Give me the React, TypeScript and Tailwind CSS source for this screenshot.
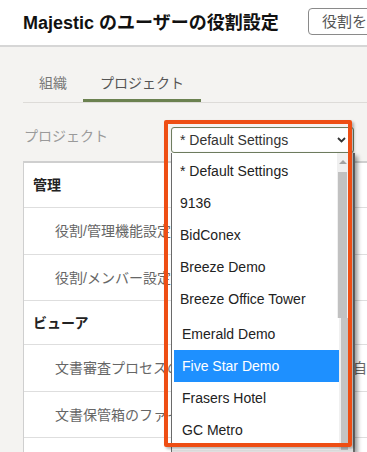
import React from 'react';

const rows: { label: string; head?: boolean; h: string }[] = [
  { label: '管理', head: true, h: 'h-[45px]' },
  { label: '役割/管理機能設定', h: 'h-[47px]' },
  { label: '役割/メンバー設定', h: 'h-[46px]' },
  { label: 'ビューア', head: true, h: 'h-[44px]' },
  { label: '文書審査プロセスのステップを追加および編集 自分', h: 'h-[47px]' },
  { label: '文書保管箱のファイルを表示', h: 'h-[46px]' },
  { label: '文書保管箱のファイルをダウンロード', h: 'h-[47px]' },
];

const upperItems = ['* Default Settings', '9136', 'BidConex', 'Breeze Demo', 'Breeze Office Tower'];
const lowerItems = ['Emerald Demo', 'Five Star Demo', 'Frasers Hotel', 'GC Metro'];

export default function App() {
  return (
    <div className="relative w-[367px] h-[452px] overflow-hidden bg-[#f4f3f1] font-['Liberation_Sans','Noto_Sans_CJK_JP',sans-serif]">
      {/* Header */}
      <div className="h-[47px] bg-white border-b-2 border-[#d6d6d6] flex items-center pl-[23px] whitespace-nowrap">
        <div className="w-[285px] shrink-0 text-[18px] leading-[24px] font-bold text-[#111]">
          Majestic のユーザーの役割設定
        </div>
        <div className="shrink-0 h-[27px] mt-[-2px] border border-[#8a8a8a] rounded-[4px] bg-white pl-[13px] pr-[13px] flex items-center text-[15px] leading-[20px] text-[#555]">
          役割を作成
        </div>
      </div>

      {/* Content */}
      <div className="pl-[23px]">
        {/* Tabs */}
        <div className="mt-[26px] flex border-b border-[#dddbd8]">
          <div className="px-[16px] pb-[6px] border-b-[3px] border-transparent text-[14px] leading-[20px] text-[#777]">
            組織
          </div>
          <div className="px-[17px] pb-[6px] border-b-[3px] border-[#6b8150] text-[14px] leading-[20px] text-[#555]">
            プロジェクト
          </div>
        </div>

        {/* Project select row */}
        <div className="mt-[24px] h-[26px] flex items-start">
          <div className="w-[148px] shrink-0 text-[14px] leading-[20px] text-[#9a9a9a] pl-[1px] mt-[-1px]">プロジェクト</div>
          <div className="w-[183px] h-[26px] shrink-0 border border-[#6f7d60] rounded-[3px] bg-white flex items-center pl-[8px] pr-[6px] text-[14px] leading-[18px] text-[#333] shadow-[inset_0_0_1px_rgba(0,0,0,0.2)]">
            <span className="flex-1">* Default Settings</span>
            <svg width="9" height="6" viewBox="0 0 9 6" className="mr-[1px]">
              <path d="M1 1 L4.5 4.5 L8 1" fill="none" stroke="#333" strokeWidth="1.8" />
            </svg>
          </div>
        </div>

        {/* Table */}
        <div className="mt-[8px] bg-white border-t-2 border-l border-[#cfcfcf]">
          {rows.map((r, i) => (
            <div
              key={i}
              className={`${r.h} border-b border-[#dedede] flex items-center whitespace-nowrap ${
                r.head ? 'pl-[9px] font-bold text-[#222]' : 'pl-[31px] text-[#666]'
              } text-[14px] leading-[20px]`}
            >
              {r.label}
            </div>
          ))}
        </div>
      </div>

      {/* Dropdown list (open) */}
      <div className="absolute left-[171px] top-[153px] w-[184px] h-[299px] border-l border-r-2 border-[#6a6a6a] bg-white shadow-[3px_3px_4px_rgba(0,0,0,0.35)] text-[14px] leading-[18px] text-[#222] whitespace-nowrap">
        {/* upper block */}
        <div className="flex h-[165px]">
          <div className="w-[165px] pt-[2px]">
            {upperItems.map((t) => (
              <div key={t} className="h-[32px] flex items-center pl-[8px]">
                {t}
              </div>
            ))}
          </div>
          <div className="w-[16px] bg-[#f0f0f0] flex flex-col items-center">
            <svg width="10" height="6" viewBox="0 0 10 6" className="mt-[6px] ml-[-4px]">
              <path d="M1 5 L5 1 L9 5 Z" fill="#a3a3a3" />
            </svg>
            <div className="mt-[7px] ml-[-5px] w-[9px] flex-1 bg-[#c1c1c1]" />
          </div>
        </div>
        {/* lower block */}
        <div className="flex h-[132px] pl-[2px]">
          <div className="w-[165px]">
            {lowerItems.map((t) => (
              <div
                key={t}
                className={`h-[32px] flex items-center pl-[8px] ${
                  t === 'Five Star Demo' ? 'bg-[#1e90ff] text-white' : ''
                }`}
              >
                {t}
              </div>
            ))}
          </div>
          <div className="w-[14px] bg-[#f0f0f0] flex">
            <div className="ml-[2px] w-[7px] h-full bg-[#c4c4c4]" />
          </div>
        </div>
        <div className="h-[2px] bg-[#e2e2e2]" />
      </div>

      {/* Orange annotation box */}
      <div className="absolute left-[164px] top-[120px] w-[188px] h-[327px] border-4 border-[#ee4e14] rounded-[2px] shadow-[2px_2px_3px_rgba(0,0,0,0.3)]" />
    </div>
  );
}
